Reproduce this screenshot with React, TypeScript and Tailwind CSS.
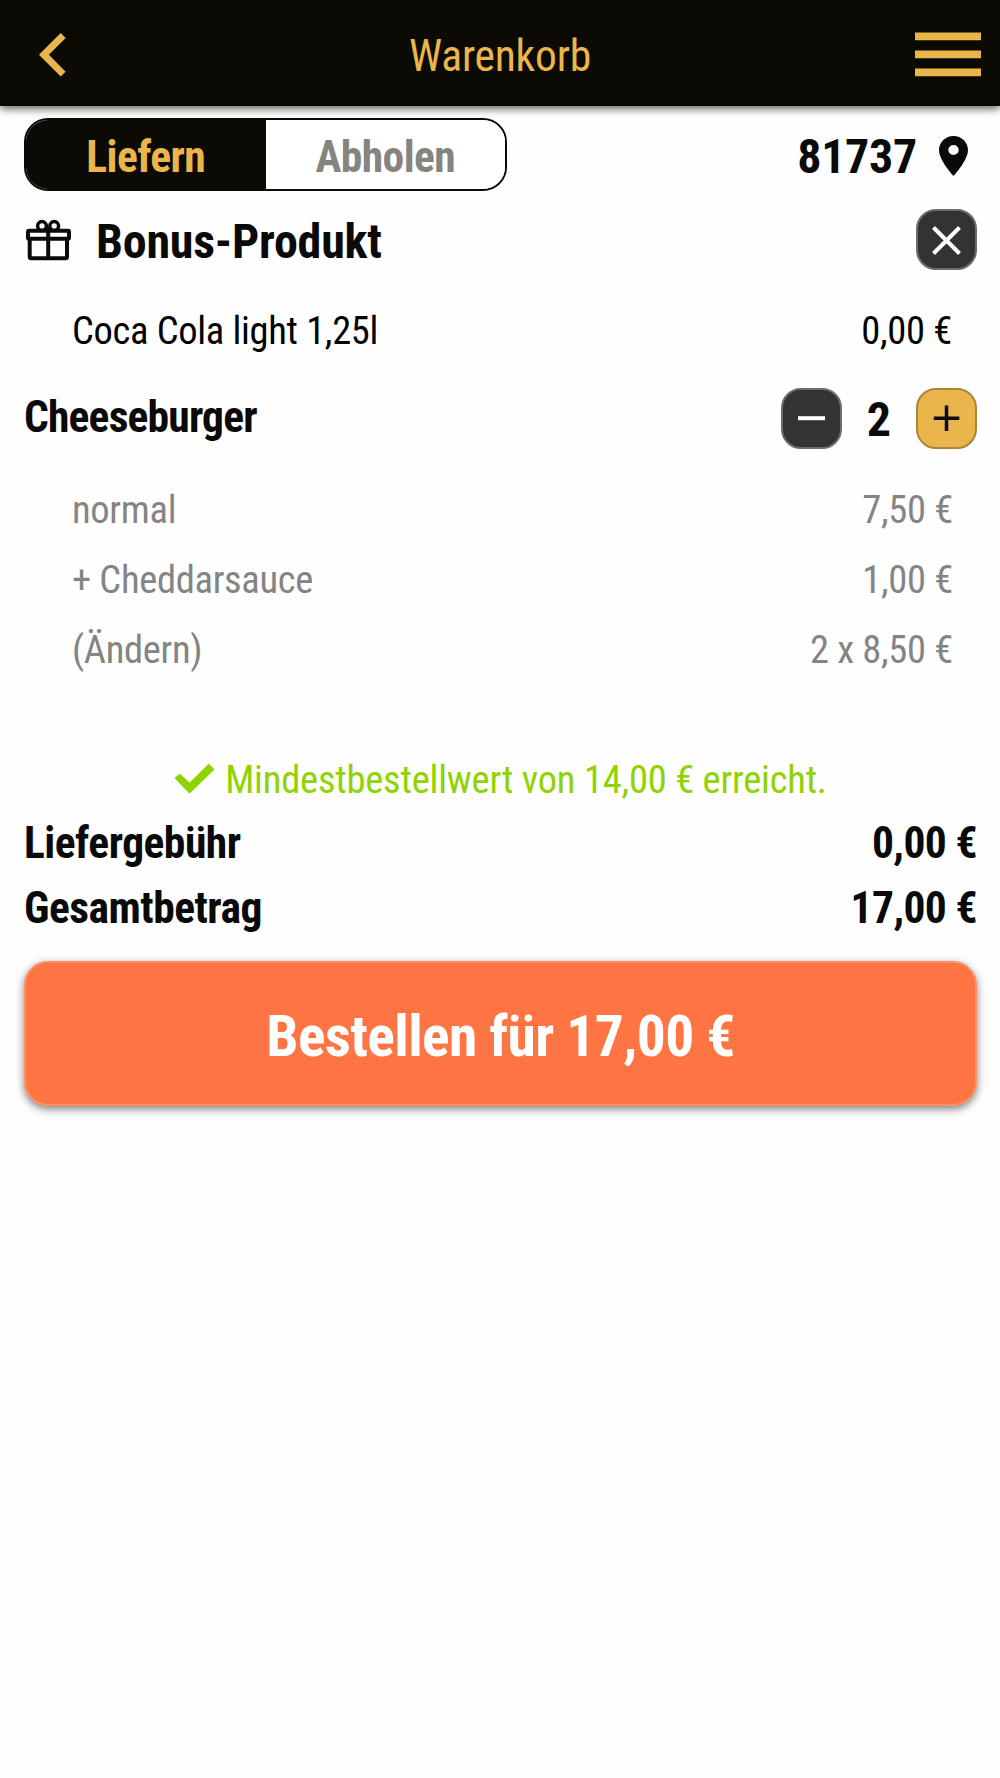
import type { ReactNode } from 'react';

type CartLine = {
  label: string;
  price: string;
};

const options: CartLine[] = [
  { label: 'normal', price: '7,50 €' },
  { label: '+ Cheddarsauce', price: '1,00 €' },
  { label: '(Ändern)', price: '2 x 8,50 €' },
];

const totals: CartLine[] = [
  { label: 'Liefergebühr', price: '0,00 €' },
  { label: 'Gesamtbetrag', price: '17,00 €' },
];

function SquareButton({ label, className, children }: { label: string; className: string; children: ReactNode }) {
  return (
    <button
      aria-label={label}
      className={`flex h-[61px] w-[61px] shrink-0 items-center justify-center rounded-[20px] border-2 ${className}`}
    >
      <svg width="30" height="30" viewBox="0 0 30 30" fill="none" stroke="currentColor" strokeWidth="4">
        {children}
      </svg>
    </button>
  );
}

function Header() {
  return (
    <header className="relative flex h-[106px] items-center justify-between bg-[#0b0a04] px-[19px] text-[#eab64b] shadow-[0_3px_8px_rgba(0,0,0,0.6)]">
      <svg className="mt-[3px]" width="66" height="44" viewBox="0 0 66 44" fill="none" stroke="currentColor" strokeWidth="7">
        <path d="M44.200 2.500 24.900 21.800 44.200 41.100" />
      </svg>
      <h1 className="mt-[8px] text-[43.5px] leading-none font-[450] tracking-[-0.2px]">Warenkorb</h1>
      <svg className="mt-[3px]" width="66" height="45" viewBox="0 0 66 45" fill="currentColor">
        <path d="M0 0.5h66v7.700H0zM0 18.500h66v7.700H0zM0 36.600h66v7.700H0z" />
      </svg>
    </header>
  );
}

function DeliveryBar() {
  return (
    <div className="flex h-[73px] items-center justify-between">
      <div className="flex h-[73px] w-[483px] overflow-hidden rounded-[24px] border-2 border-[#0b0a04] text-[43.5px] leading-none font-bold tracking-[-0.6px]">
        <button className="flex-1 bg-[#0b0a04] pt-[7px] text-[#eab64b]">Liefern</button>
        <button className="flex-1 bg-white pt-[7px] text-[#858480]">Abholen</button>
      </div>
      <div className="flex items-center gap-[22px] pr-[9px]">
        <span className="mt-[5px] text-[48px] leading-none font-bold tracking-[-0.3px]">81737</span>
        <svg className="mt-[2px]" width="29" height="40" viewBox="5 2 14 20" preserveAspectRatio="none" fill="currentColor">
          <path d="M12 2C8.130 2 5 5.130 5 9c0 5.250 7 13 7 13s7-7.750 7-13c0-3.870-3.130-7-7-7zm0 9.500a2.500 2.500 0 1 1 0-5 2.500 2.500 0 0 1 0 5z" />
        </svg>
      </div>
    </div>
  );
}

function GiftIcon() {
  return (
    <svg width="48" height="42" viewBox="0 0 48 42" fill="none" stroke="currentColor" strokeWidth="4">
      <rect x="4" y="11.700" width="41" height="8" rx="1" />
      <path d="M5.700 19.700v18a1.600 1.600 0 0 0 1.600 1.600h34.100a1.600 1.600 0 0 0 1.600-1.600v-18M24.200 8v31" />
      <circle cx="18" cy="7" r="4.400" strokeWidth="3.500" />
      <circle cx="30.200" cy="7" r="4.400" strokeWidth="3.500" />
    </svg>
  );
}

export default function App() {
  return (
    <div className="min-h-[1778px] bg-[#fefefe] font-['Roboto_Condensed','Roboto',sans-serif] text-[#0a0a0a] font-stretch-condensed">
      <Header />
      <main className="pt-3 pr-[23px] pl-6">
        <DeliveryBar />

        <section>
          <div className="flex h-[97px] items-center">
            <GiftIcon />
            <h2 className="mt-[5px] ml-[24px] flex-1 text-[48px] leading-none font-bold tracking-[-0.2px]">Bonus-Produkt</h2>
            <SquareButton label="Entfernen" className="border-[#6c6c6c] bg-[#333] text-white">
              <path d="M1.500 2.500l26 26M27.500 2.500l-26 26" />
            </SquareButton>
          </div>
          <div className="mt-[8px] flex h-[70px] items-center justify-between pr-[25px] pl-[48px] text-[38.5px] text-black">
            <span className="tracking-[-0.3px]">Coca Cola light 1,25l</span>
            <span className="tracking-[-0.3px]">0,00 €</span>
          </div>
        </section>

        <section>
          <div className="flex h-[105px] items-center">
            <h2 className="-mt-[1px] flex-1 text-[43.5px] leading-none font-bold tracking-[-0.8px]">Cheeseburger</h2>
            <SquareButton label="Weniger" className="border-[#6c6c6c] bg-[#333] text-white">
              <path d="M1 14.200h27" />
            </SquareButton>
            <span className="mt-[3px] w-[74px] text-center text-[48px] leading-none font-bold">2</span>
            <SquareButton label="Mehr" className="border-[#a98538] bg-[#eab64b] text-[#0a0a0a]">
              <path d="M1.800 14.200h25.500M14.500 1.500v25.500" strokeWidth="3.500" />
            </SquareButton>
          </div>
          <div className="mt-[4px] text-[38.5px] tracking-[-0.3px] text-[#848484]">
            {options.map((line) => (
              <div key={line.label} className="flex h-[70px] items-center justify-between pr-[24px] pl-[48px]">
                <span>{line.label}</span>
                <span>{line.price}</span>
              </div>
            ))}
          </div>
        </section>

        <p className="mt-[70px] flex h-[50px] items-center justify-center gap-[11px] text-[38.5px] tracking-[-0.2px] text-[#8fd300]">
          <svg
            className="-mt-[4px]"
            width="40"
            height="31"
            viewBox="0 0 40 31"
            fill="currentColor"
            stroke="currentColor"
            strokeWidth="2"
            strokeLinejoin="round"
          >
            <path d="M1.800 15 5.800 12 15.700 20.900 34.800 2 39 6.500 15.500 29.300z" />
          </svg>
          Mindestbestellwert von 14,00 € erreicht.
        </p>

        <div className="mt-[6px] text-[43.5px] font-bold">
          {totals.map((line) => (
            <div key={line.label} className="flex h-[65px] items-center justify-between">
              <span className="tracking-[-0.5px]">{line.label}</span>
              <span className="tracking-[-0.6px]">{line.price}</span>
            </div>
          ))}
        </div>

        <button className="mt-[20px] h-[145px] w-full rounded-[24px] border-2 border-[#ff9068] bg-[#ff7443] pt-[8px] text-[57.5px] font-bold tracking-[-0.6px] text-white shadow-[0_3px_8px_rgba(0,0,0,0.5)]">
          Bestellen für 17,00 €
        </button>
      </main>
    </div>
  );
}
